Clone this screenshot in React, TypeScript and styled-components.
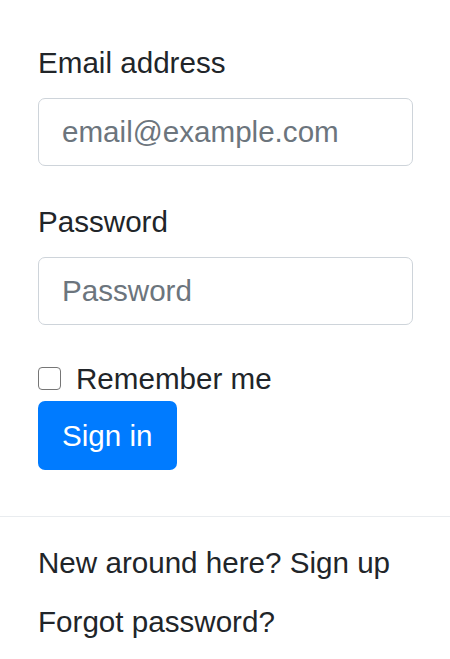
import React from "react";
import styled, { createGlobalStyle } from "styled-components";

const Global = createGlobalStyle`
  html, body { margin: 0; padding: 0; background: #ffffff; }
  body {
    font-family: "Liberation Sans", Arial, sans-serif;
    font-size: 29.6px;
    line-height: 43px;
    color: #212529;
  }
  * { box-sizing: border-box; }
`;

const Menu = styled.div`
  width: 450px;
  background: #ffffff;
`;

const Form = styled.form`
  padding: 41px 37px 0 38px;
  display: flex;
  flex-direction: column;
`;

const Group = styled.div<{ $space: number }>`
  display: flex;
  flex-direction: column;
  margin-bottom: ${(p) => p.$space}px;
`;

const Label = styled.label`
  display: block;
  margin-bottom: 14px;
`;

const Input = styled.input`
  height: 68px;
  width: 100%;
  padding: 0 23px;
  border: 1px solid #ced4da;
  border-radius: 7px;
  font: inherit;
  color: #495057;
  background: #fff;
  outline: none;
  &::placeholder { color: #6c757d; opacity: 1; }
`;

const CheckRow = styled.label`
  display: flex;
  align-items: center;
  gap: 15px;
  height: 43px;
  margin-bottom: 1px;
`;

const Check = styled.input`
  appearance: none;
  width: 23px;
  height: 23px;
  margin: 0;
  border: 1.5px solid #767676;
  border-radius: 4px;
  background: #fff;
`;

const Button = styled.button`
  align-self: flex-start;
  height: 69px;
  padding: 0 24px;
  border: none;
  border-radius: 7px;
  background: #007bff;
  color: #ffffff;
  font: inherit;
`;

const Divider = styled.div`
  height: 1px;
  margin-top: 46px;
  background: #e9ecef;
`;

const Links = styled.div`
  padding-top: 16px;
  display: flex;
  flex-direction: column;
`;

const Item = styled.a`
  display: block;
  padding: 8px 38px;
  color: #212529;
  text-decoration: none;
`;

export default function App() {
  return (
    <>
      <Global />
      <Menu>
        <Form onSubmit={(e) => e.preventDefault()}>
          <Group $space={34}>
            <Label htmlFor="email">Email address</Label>
            <Input id="email" type="email" placeholder="email@example.com" />
          </Group>
          <Group $space={32}>
            <Label htmlFor="pw">Password</Label>
            <Input id="pw" type="password" placeholder="Password" />
          </Group>
          <CheckRow>
            <Check type="checkbox" />
            Remember me
          </CheckRow>
          <Button type="submit">Sign in</Button>
        </Form>
        <Divider />
        <Links>
          <Item href="#">New around here? Sign up</Item>
          <Item href="#">Forgot password?</Item>
        </Links>
      </Menu>
    </>
  );
}
